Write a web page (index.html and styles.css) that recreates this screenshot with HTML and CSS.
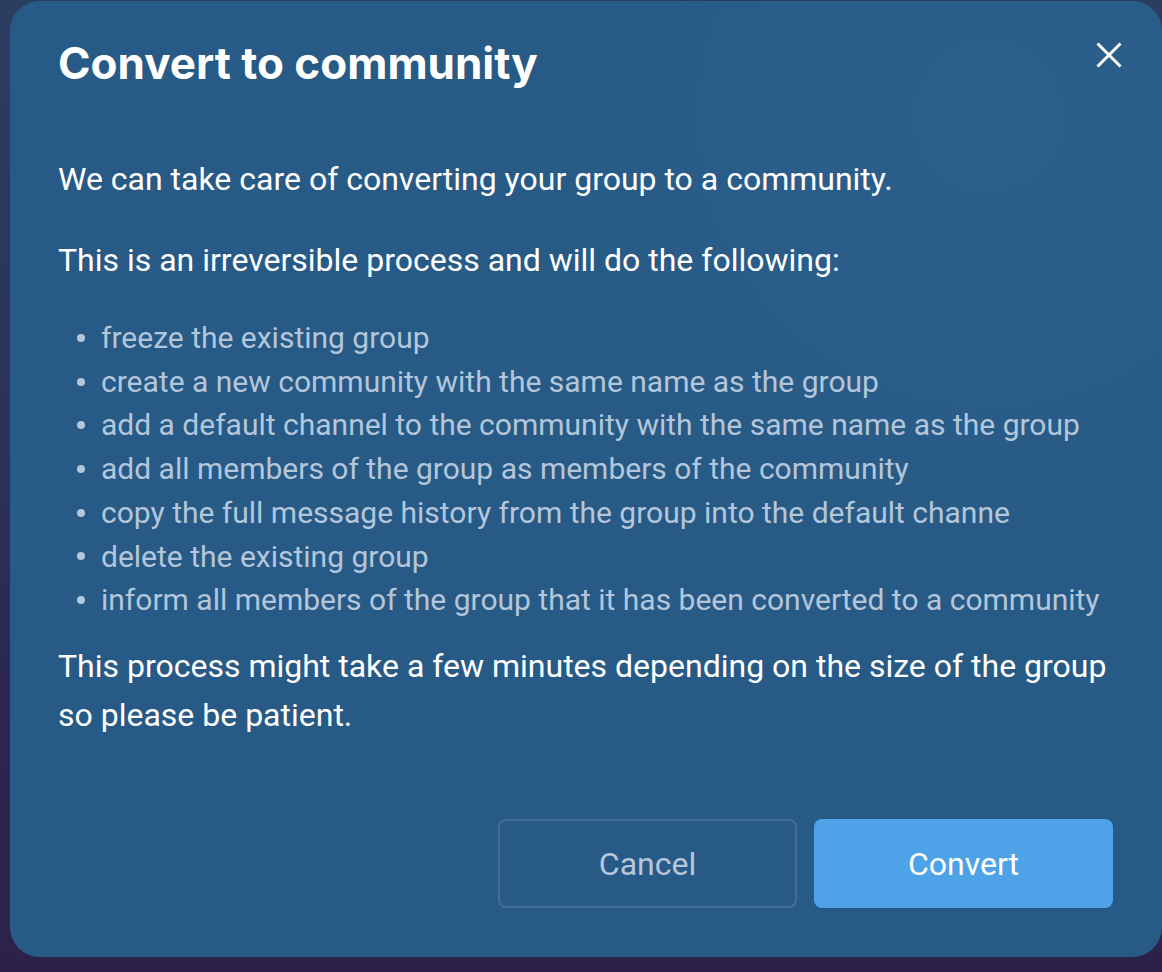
FILE: index.html
```html
<!DOCTYPE html>
<html lang="en">
<head>
<meta charset="utf-8">
<title>Convert to community</title>
<link rel="stylesheet" href="styles.css">
</head>
<body>
<div class="modal">
  <div class="modal-header">
    <h1 class="title">Convert to community</h1>
    <button class="close" aria-label="Close">
      <svg width="26" height="26" viewBox="0 0 26 26"><path d="M1.5 1.5L24.5 24.5M24.5 1.5L1.5 24.5" stroke="#fff" stroke-width="3" stroke-linecap="butt"/></svg>
    </button>
  </div>
  <div class="modal-body">
    <p class="para first">We can take care of converting your group to a community.</p>
    <p class="para second">This is an irreversible process and will do the following:</p>
    <ul class="steps">
      <li>freeze the existing group</li>
      <li>create a new community with the same name as the group</li>
      <li>add a default channel to the community with the same name as the group</li>
      <li>add all members of the group as members of the community</li>
      <li>copy the full message history from the group into the default channe</li>
      <li>delete the existing group</li>
      <li>inform all members of the group that it has been converted to a community</li>
    </ul>
    <p class="para last">This process might take a few minutes depending on the size of the group so please be patient.</p>
  </div>
  <div class="modal-footer">
    <button class="btn btn-secondary">Cancel</button>
    <button class="btn btn-primary">Convert</button>
  </div>
</div>
</body>
</html>
```
FILE: styles.css
```css
html, body {
  margin: 0;
  padding: 0;
}
body {
  width: 1162px;
  height: 972px;
  overflow: hidden;
  background: linear-gradient(180deg, #2a3e62 0%, #2c3258 45%, #2d2550 75%, #2c2249 100%);
  font-family: Roboto, "Liberation Sans", sans-serif;
}
.modal {
  box-sizing: border-box;
  margin: 1px 0 0 10px;
  width: 1152px;
  height: 956px;
  border-radius: 30px;
  background: radial-gradient(circle at 85% 12%, #2c5f8c 0%, #285a86 35%, #275a86 100%);
  padding: 37px 49px 49px 48px;
  display: flex;
  flex-direction: column;
}
.modal-header {
  display: flex;
  justify-content: space-between;
  align-items: flex-start;
}
.title {
  margin: 0;
  font-family: Inter, "Open Sans", sans-serif;
  font-weight: 700;
  font-size: 44px;
  line-height: 50px;
  letter-spacing: 0;
  color: #fff;
}
.close {
  width: 40px;
  height: 40px;
  margin: -3px -16px 0 0;
  padding: 0;
  border: 0;
  background: transparent;
  display: flex;
  align-items: center;
  justify-content: center;
}
.modal-body {
  padding-top: 67px;
  flex: 1;
}
.para {
  margin: 0;
  font-size: 32px;
  line-height: 49px;
  color: #fff;
}
.second {
  margin-top: 32px;
}
.steps {
  list-style: none;
  margin: 31px 0 0 0;
  padding: 0;
}
.steps li {
  display: flex;
  align-items: center;
  font-size: 30px;
  line-height: 43.7px;
  color: #b4c6da;
  white-space: nowrap;
}
.steps li::before {
  content: "";
  flex: 0 0 auto;
  width: 8px;
  height: 8px;
  border-radius: 50%;
  background: #b4c6da;
  margin: 0 16px 0 19px;
}
.last {
  margin-top: 20px;
}
.modal-footer {
  display: flex;
  justify-content: flex-end;
  gap: 17px;
}
.btn {
  box-sizing: border-box;
  width: 299px;
  height: 89px;
  border-radius: 8px;
  font-family: Roboto, "Liberation Sans", sans-serif;
  font-size: 32px;
  font-weight: 400;
  cursor: pointer;
}
.btn-secondary {
  background: transparent;
  border: 2px solid rgba(255, 255, 255, 0.12);
  color: #b7c7d9;
}
.btn-primary {
  background: #4ea2e8;
  border: 0;
  color: #fff;
}
```
